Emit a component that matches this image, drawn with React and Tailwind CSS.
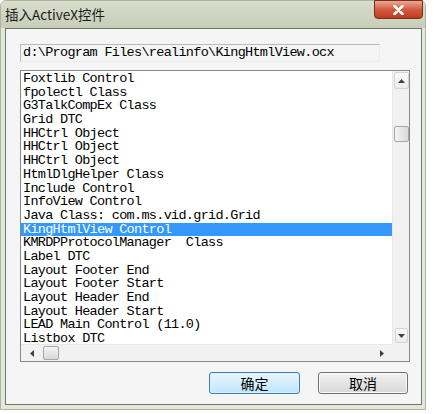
import React from "react";

const items = [
  "Foxtlib Control",
  "fpolectl Class",
  "G3TalkCompEx Class",
  "Grid DTC",
  "HHCtrl Object",
  "HHCtrl Object",
  "HHCtrl Object",
  "HtmlDlgHelper Class",
  "Include Control",
  "InfoView Control",
  "Java Class: com.ms.vid.grid.Grid",
  "KingHtmlView Control",
  "KMRDPProtocolManager  Class",
  "Label DTC",
  "Layout Footer End",
  "Layout Footer Start",
  "Layout Header End",
  "Layout Header Start",
  "LEAD Main Control (11.0)",
  "Listbox DTC",
];

const selected = 11;

function Arrow({ dir }) {
  const pts = {
    up: "0,4 3.5,0 7,4",
    down: "0,0 3.5,4 7,0",
    left: "4,0 0,3.5 4,7",
    right: "0,0 4,3.5 0,7",
  }[dir];
  const vertical = dir === "up" || dir === "down";
  return (
    <svg width={vertical ? 7 : 4} height={vertical ? 4 : 7} viewBox={vertical ? "0 0 7 4" : "0 0 4 7"}>
      <polygon points={pts} fill="#404040" />
    </svg>
  );
}

export default function App() {
  return (
    <div className="w-[438px] h-[414px] bg-white" style={{ fontFamily: '"Noto Sans CJK SC", sans-serif' }}>
      <div className="w-[426px] h-[410px] flex flex-col rounded-t-[6px] border border-[#aeb4a2] bg-[#e4e8d9]">
        {/* Title bar */}
        <div className="relative h-[27px] shrink-0 bg-gradient-to-b from-[#d9ddcc] to-[#c8cdb9] rounded-t-[6px]">
          <div className="absolute left-[4px] top-[4px] text-[13.5px] leading-[18px] text-[#1b1b1b]">插入ActiveX控件</div>
          <div className="absolute right-[2px] top-[-1px] w-[49px] h-[19px] rounded-b-[4px] border border-[#7b2a1c] bg-gradient-to-b from-[#e9a995] via-[#d35b40] to-[#c0391f] flex items-center justify-center">
            <svg width="11" height="10" viewBox="0 0 11 10">
              <path d="M1.5 1 L9.5 9 M9.5 1 L1.5 9" stroke="#ffffff" strokeWidth="2.6" strokeLinecap="round" />
            </svg>
          </div>
        </div>

        {/* Client area */}
        <div className="ml-[4px] mr-[3px] mb-[4px] flex-1 border border-[#6f7866] bg-[#f5f5f5] pl-[14px] pt-[15px] flex flex-col">
          {/* Path box */}
          <div className="w-[360px] h-[18px] border-t border-l border-[#b9b9b9] border-r border-b border-r-[#ececec] border-b-[#ececec] bg-[#f5f5f5] pl-[2px] flex items-center">
            <span className="whitespace-pre text-[13.5px] tracking-[-0.7px] text-black" style={{ fontFamily: '"Liberation Mono", monospace' }}>
              {"d:\\Program Files\\realinfo\\KingHtmlView.ocx"}
            </span>
          </div>

          {/* List box */}
          <div className="mt-[8px] w-[390px] h-[292px] border border-[#828790] bg-white flex flex-col">
            <div className="flex flex-1 min-h-0">
              <div className="flex-1 overflow-hidden pt-[1px]" style={{ fontFamily: '"Liberation Mono", monospace' }}>
                {items.map((t, i) => (
                  <div
                    key={i}
                    className={`h-[13.7px] leading-[14px] pl-[2px] whitespace-pre text-[13.5px] tracking-[-0.7px] ${i === selected ? "bg-[#3399ff] text-white" : "text-black"}`}
                  >
                    {t}
                  </div>
                ))}
              </div>
              {/* Vertical scrollbar */}
              <div className="w-[17px] bg-[#f1f1f1] border-l border-[#e8e8e8] flex flex-col items-center pt-[1px]">
                <div className="w-[15px] h-[17px] rounded-[2px] border border-[#d4d4d4] bg-gradient-to-b from-[#fbfbfb] to-[#ebebeb] flex items-center justify-center">
                  <Arrow dir="up" />
                </div>
                <div className="mt-[37px] w-[15px] h-[16px] rounded-[2px] border border-[#a6a6a6] bg-gradient-to-r from-[#f4f4f4] to-[#d9d9d9]" />
                <div className="flex-1" />
                <div className="w-[13px] h-[15px] mb-[1px] rounded-[2px] border border-[#d4d4d4] bg-gradient-to-b from-[#fbfbfb] to-[#ebebeb] flex items-center justify-center">
                  <Arrow dir="down" />
                </div>
              </div>
            </div>
            {/* Horizontal scrollbar */}
            <div className="h-[17px] shrink-0 flex">
              <div className="flex-1 bg-[#f1f1f1] border-t border-[#e8e8e8] flex items-center pl-[9px]">
                <Arrow dir="left" />
                <div className="ml-[9px] w-[16px] h-[14px] rounded-[2px] border border-[#a6a6a6] bg-gradient-to-b from-[#f4f4f4] to-[#d9d9d9]" />
                <div className="flex-1" />
                <div className="mr-[8px]">
                  <Arrow dir="right" />
                </div>
              </div>
              <div className="w-[17px] bg-[#f1f1f1]" />
            </div>
          </div>

          {/* Buttons */}
          <div className="mt-[10px] w-[388px] flex justify-end gap-[18px]">
            <button className="w-[91px] h-[22px] rounded-[3px] border border-[#3c7fb1] bg-gradient-to-b from-[#eaf6fd] to-[#bee6fd] text-[14px] leading-[18px] text-black shadow-[inset_0_0_0_1px_#d9f0fc]">
              确定
            </button>
            <button className="w-[90px] h-[22px] rounded-[3px] border border-[#707070] bg-gradient-to-b from-[#f2f2f2] to-[#d8d8d8] text-[14px] leading-[18px] text-black shadow-[inset_0_0_0_1px_#fbfbfb]">
              取消
            </button>
          </div>
        </div>
      </div>
    </div>
  );
}
